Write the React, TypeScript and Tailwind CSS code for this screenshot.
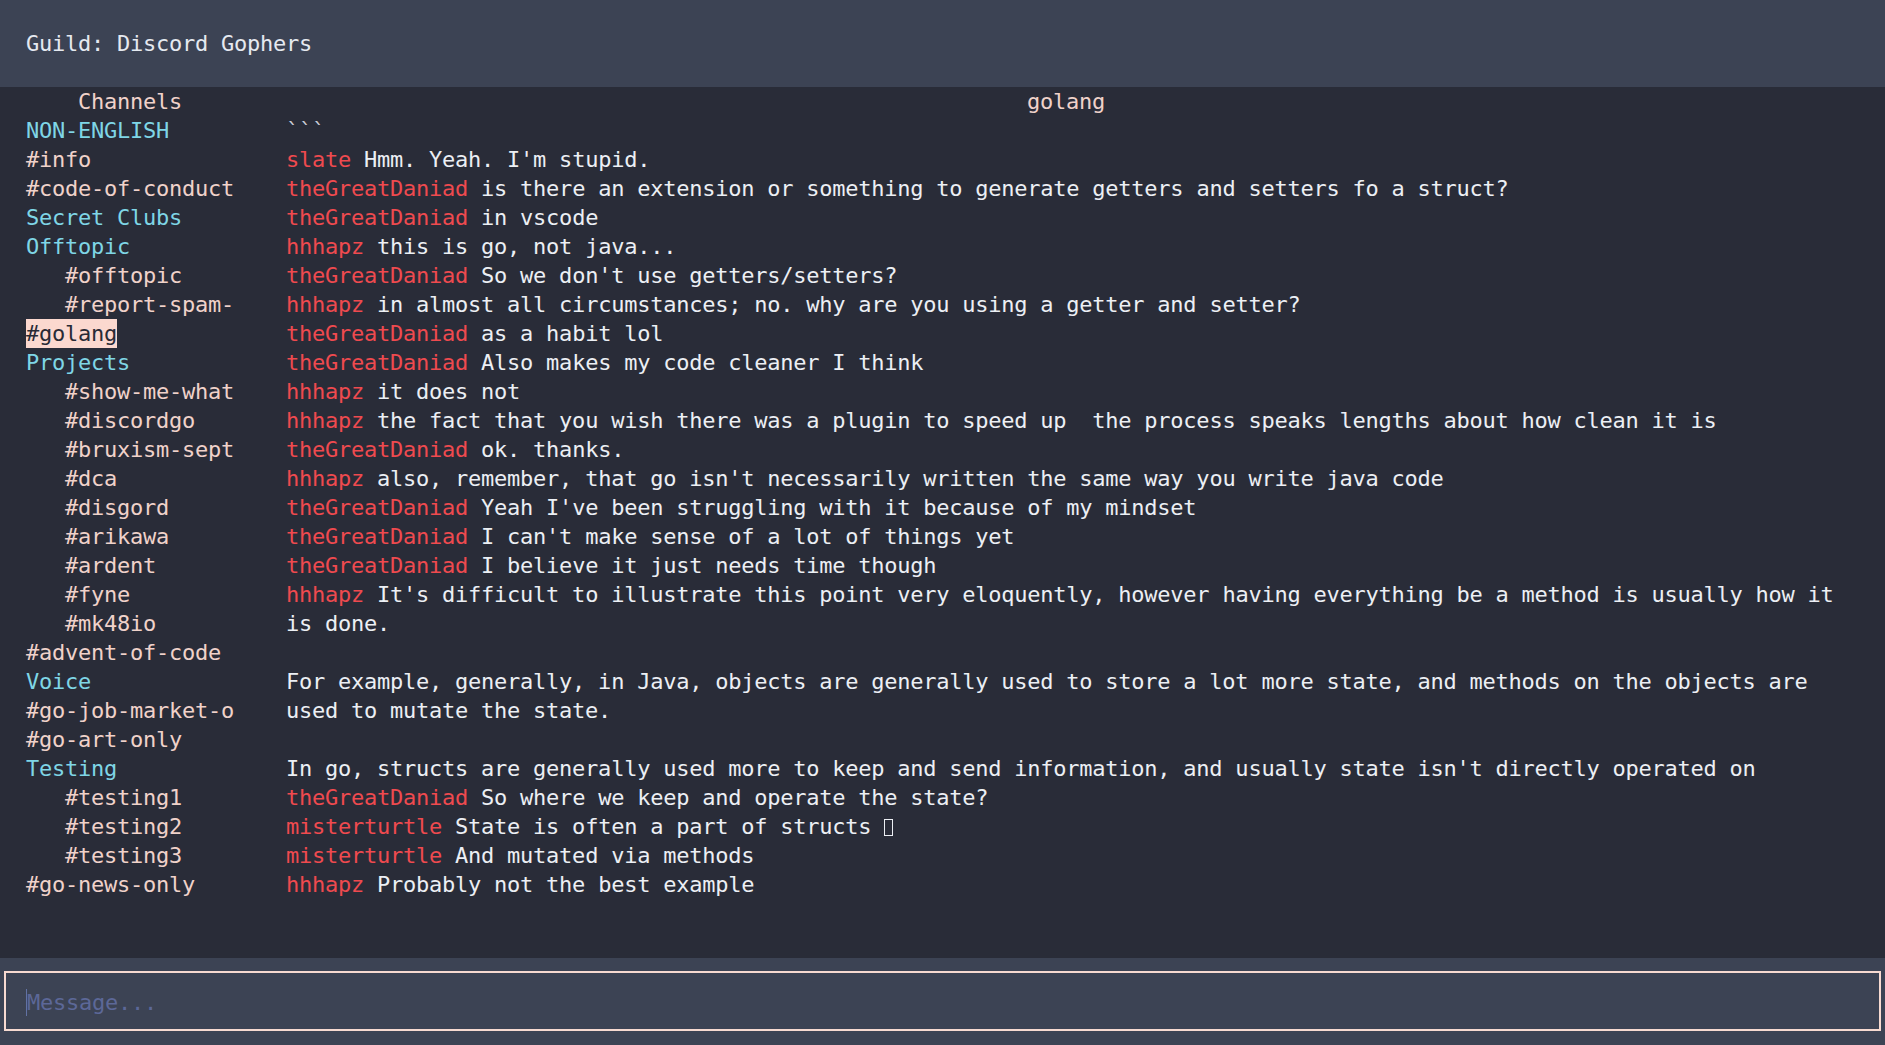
import React from 'react';

type Line =
	| { kind: 'blank' }
	| { kind: 'msg'; author?: string; text: string; tone?: 'tick' };

type Channel = {
	name: string;
	type: 'group' | 'top' | 'sub';
	active?: boolean;
};

const channels: Channel[] = [
	{ name: 'NON-ENGLISH', type: 'group' },
	{ name: '#info', type: 'top' },
	{ name: '#code-of-conduct', type: 'top' },
	{ name: 'Secret Clubs', type: 'group' },
	{ name: 'Offtopic', type: 'group' },
	{ name: '#offtopic', type: 'sub' },
	{ name: '#report-spam-', type: 'sub' },
	{ name: '#golang', type: 'top', active: true },
	{ name: 'Projects', type: 'group' },
	{ name: '#show-me-what', type: 'sub' },
	{ name: '#discordgo', type: 'sub' },
	{ name: '#bruxism-sept', type: 'sub' },
	{ name: '#dca', type: 'sub' },
	{ name: '#disgord', type: 'sub' },
	{ name: '#arikawa', type: 'sub' },
	{ name: '#ardent', type: 'sub' },
	{ name: '#fyne', type: 'sub' },
	{ name: '#mk48io', type: 'sub' },
	{ name: '#advent-of-code', type: 'top' },
	{ name: 'Voice', type: 'group' },
	{ name: '#go-job-market-o', type: 'top' },
	{ name: '#go-art-only', type: 'top' },
	{ name: 'Testing', type: 'group' },
	{ name: '#testing1', type: 'sub' },
	{ name: '#testing2', type: 'sub' },
	{ name: '#testing3', type: 'sub' },
	{ name: '#go-news-only', type: 'top' },
];

const lines: Line[] = [
	{ kind: 'msg', text: '```', tone: 'tick' },
	{ kind: 'msg', author: 'slate', text: "Hmm. Yeah. I'm stupid." },
	{
		kind: 'msg',
		author: 'theGreatDaniad',
		text: 'is there an extension or something to generate getters and setters fo a struct?',
	},
	{ kind: 'msg', author: 'theGreatDaniad', text: 'in vscode' },
	{ kind: 'msg', author: 'hhhapz', text: 'this is go, not java...' },
	{ kind: 'msg', author: 'theGreatDaniad', text: "So we don't use getters/setters?" },
	{
		kind: 'msg',
		author: 'hhhapz',
		text: 'in almost all circumstances; no. why are you using a getter and setter?',
	},
	{ kind: 'msg', author: 'theGreatDaniad', text: 'as a habit lol' },
	{ kind: 'msg', author: 'theGreatDaniad', text: 'Also makes my code cleaner I think' },
	{ kind: 'msg', author: 'hhhapz', text: 'it does not' },
	{
		kind: 'msg',
		author: 'hhhapz',
		text: 'the fact that you wish there was a plugin to speed up  the process speaks lengths about how clean it is',
	},
	{ kind: 'msg', author: 'theGreatDaniad', text: 'ok. thanks.' },
	{
		kind: 'msg',
		author: 'hhhapz',
		text: "also, remember, that go isn't necessarily written the same way you write java code",
	},
	{
		kind: 'msg',
		author: 'theGreatDaniad',
		text: "Yeah I've been struggling with it because of my mindset",
	},
	{ kind: 'msg', author: 'theGreatDaniad', text: "I can't make sense of a lot of things yet" },
	{ kind: 'msg', author: 'theGreatDaniad', text: 'I believe it just needs time though' },
	{
		kind: 'msg',
		author: 'hhhapz',
		text: "It's difficult to illustrate this point very eloquently, however having everything be a method is usually how it",
	},
	{ kind: 'msg', text: 'is done.' },
	{ kind: 'blank' },
	{
		kind: 'msg',
		text: 'For example, generally, in Java, objects are generally used to store a lot more state, and methods on the objects are',
	},
	{ kind: 'msg', text: 'used to mutate the state.' },
	{ kind: 'blank' },
	{
		kind: 'msg',
		text: "In go, structs are generally used more to keep and send information, and usually state isn't directly operated on",
	},
	{ kind: 'msg', author: 'theGreatDaniad', text: 'So where we keep and operate the state?' },
	{ kind: 'msg', author: 'misterturtle', text: 'State is often a part of structs ' },
	{ kind: 'msg', author: 'misterturtle', text: 'And mutated via methods' },
	{ kind: 'msg', author: 'hhhapz', text: 'Probably not the best example' },
];

const ChannelRow = ({ channel }: { channel: Channel }) => {
	if (channel.type === 'group') {
		return <div className="h-[29.03px] text-[#7fd6e6]">{channel.name}</div>;
	}
	return (
		<div className={`h-[29.03px] ${channel.type === 'sub' ? 'pl-[39px]' : ''}`}>
			<span
				className={
					channel.active
						? 'inline-block h-[29px] bg-[#fbd8cf] text-[#282a35]'
						: 'text-[#f0d2ca]'
				}
			>
				{channel.name}
			</span>
		</div>
	);
};

const MessageRow = ({ line }: { line: Line }) => {
	if (line.kind === 'blank') return <div className="h-[29.03px]" />;
	// the emoji the terminal could not draw shows as an empty box
	const isBox = line.author === 'misterturtle' && line.text.startsWith('State');
	return (
		<div
			className={`h-[29.03px] whitespace-pre ${line.tone === 'tick' ? 'text-[#c9cdd6]' : 'text-[#eceff4]'}`}
		>
			{line.author && <span className="text-[#ef4a4f]">{line.author} </span>}
			{line.text}
			{isBox && (
				<span className="inline-block h-[17px] w-[9px] border border-[#eceff4] align-[-2px]" />
			)}
		</div>
	);
};

export default function App() {
	return (
		<div
			className="flex h-[1045px] w-[1885px] flex-col overflow-hidden bg-[#292c38] text-[22px] leading-[29.03px] tracking-[-0.24px]"
			style={{ fontFamily: '"DejaVu Sans Mono", "Liberation Mono", monospace' }}
		>
			<header className="h-[87px] shrink-0 bg-[#3c4354] px-[26px] pt-[29px] text-[#e5e9f0]">
				Guild: Discord Gophers
			</header>

			<main className="flex h-[871px] shrink-0">
				<aside className="w-[286px] shrink-0 pl-[26px]">
					<div className="h-[29.03px] pl-[52px] text-[#f0d2ca]">Channels</div>
					{channels.map((channel) => (
						<ChannelRow key={channel.name} channel={channel} />
					))}
				</aside>

				<section className="w-[1560px] shrink-0">
					<div className="h-[29.03px] text-center text-[#f0d2ca]">golang</div>
					{lines.map((line, index) => (
						<MessageRow key={`line_${index}`} line={line} />
					))}
				</section>
			</main>

			<footer className="h-[87px] shrink-0 bg-[#3c4354] px-[4px] pt-[13px]">
				<div className="flex h-[60px] items-start border-2 border-[#f7dad1] pl-[20px] pt-[15px]">
					<span className="mt-[1px] inline-block h-[27px] w-px bg-[#6272a4]" />
					<span className="text-[#5c6898]">Message...</span>
				</div>
			</footer>
		</div>
	);
}
